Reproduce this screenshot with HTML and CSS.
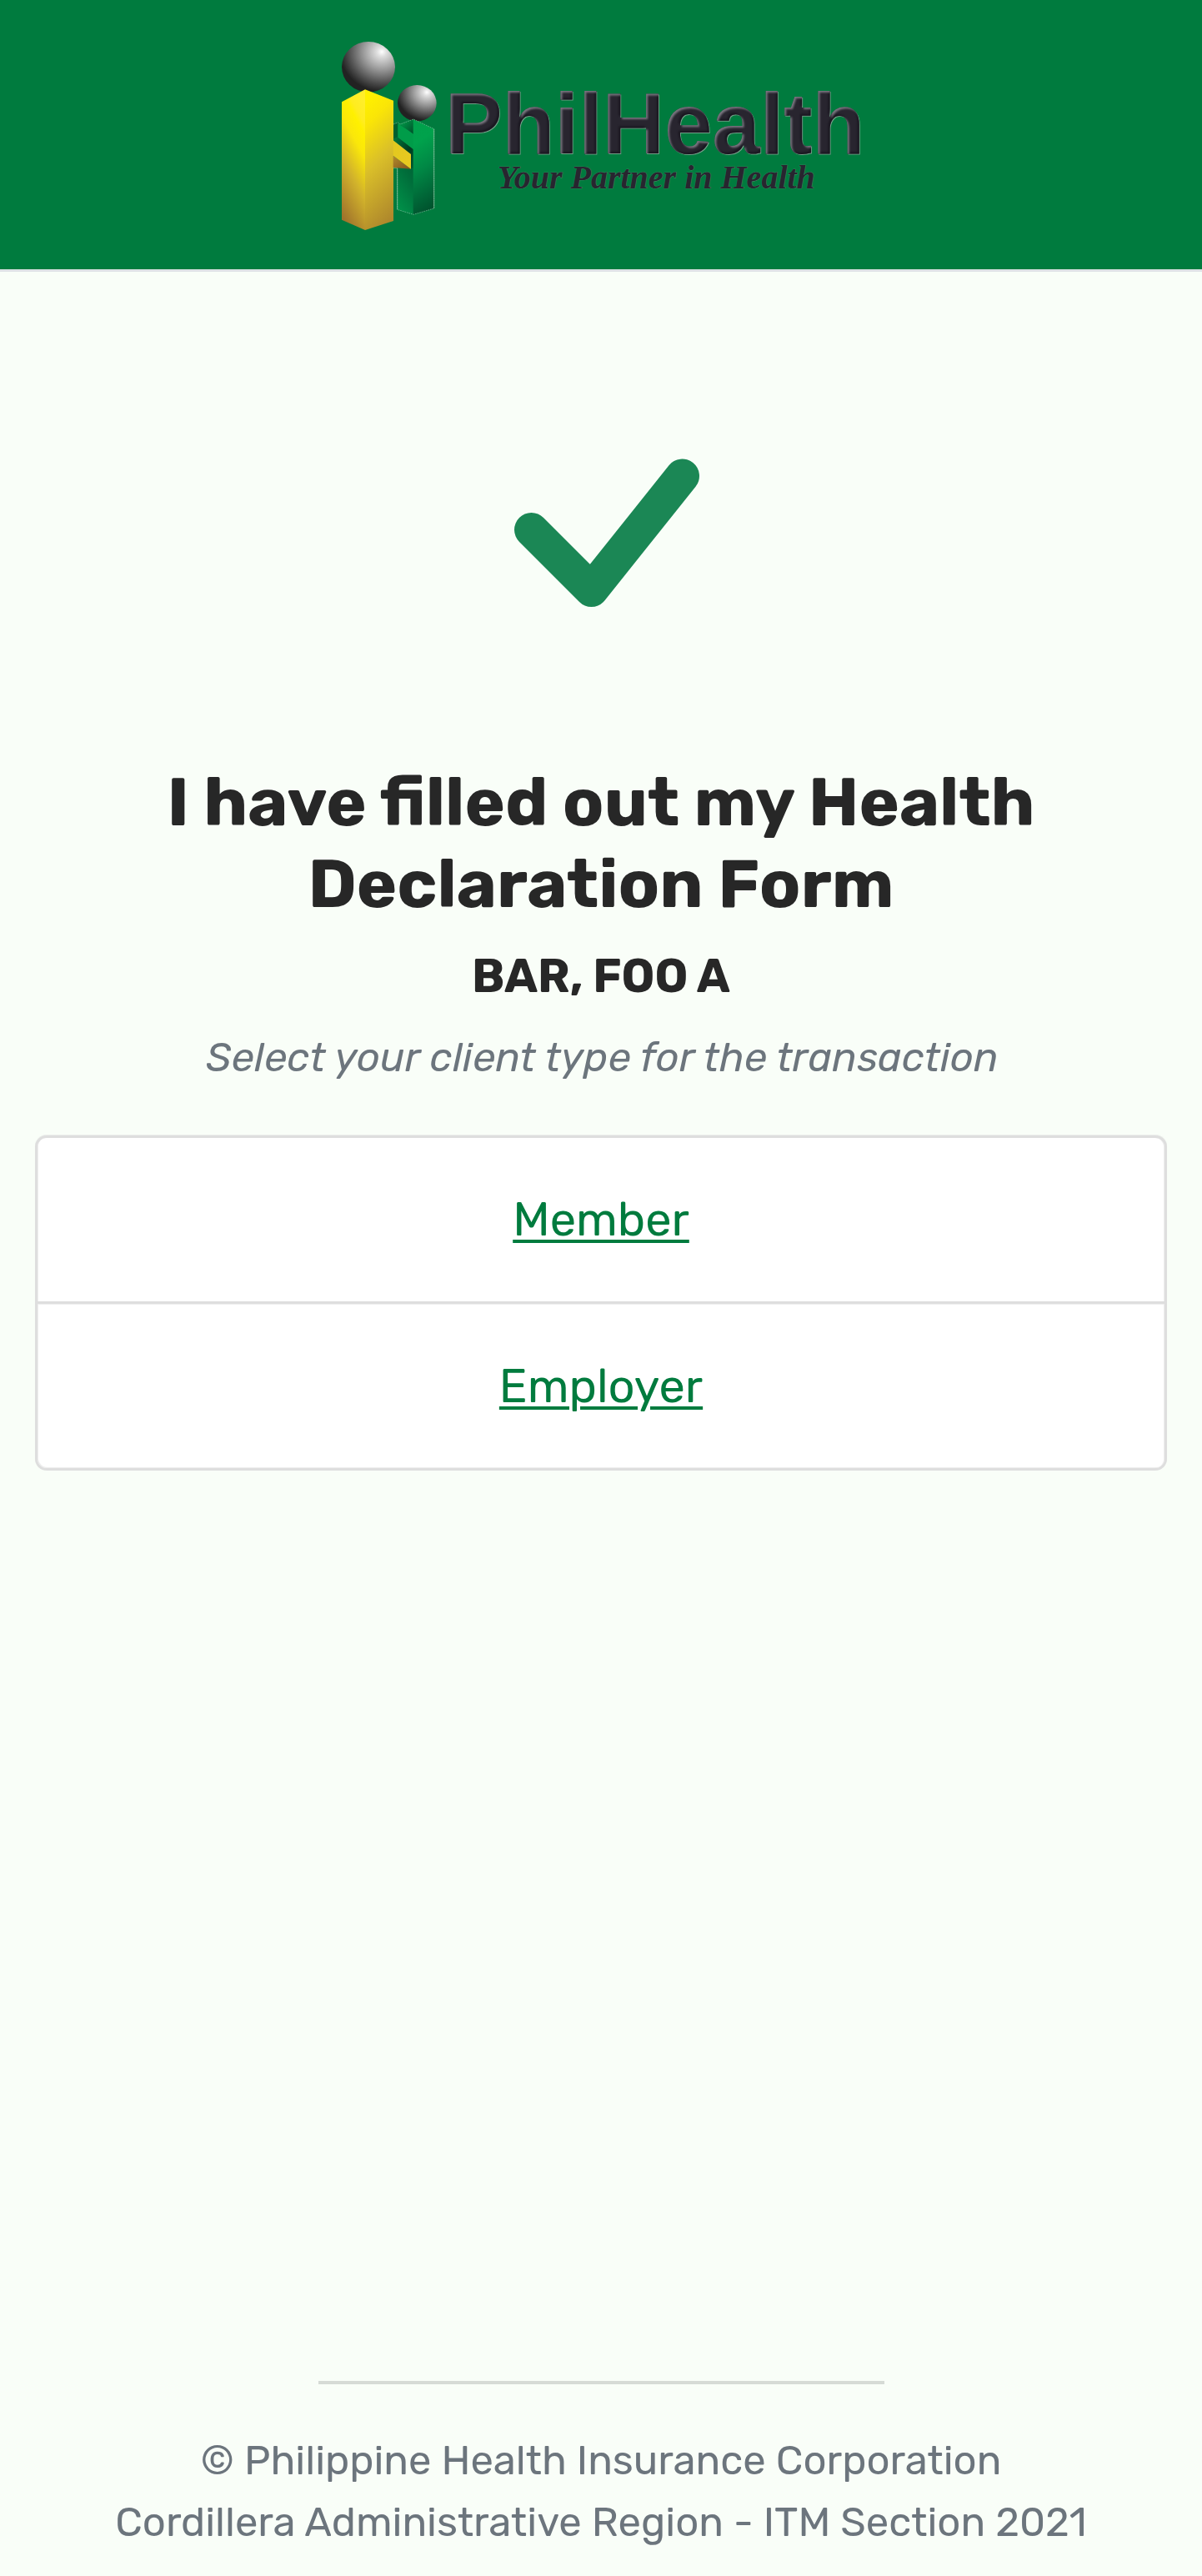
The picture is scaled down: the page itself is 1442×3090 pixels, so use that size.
FILE: index.html
```html
<!DOCTYPE html>
<html lang="en">
<head>
<meta charset="utf-8">
<title>PhilHealth Health Declaration</title>
<link rel="stylesheet" href="styles.css">
</head>
<body>
<header class="site-header">
  <svg class="logo" viewBox="27 45 1932 708" role="img" aria-label="PhilHealth">
    <defs>
      <radialGradient id="ball" cx="0.75" cy="0.2" r="0.78">
        <stop offset="0" stop-color="#fff"/>
        <stop offset="0.12" stop-color="#dedede"/>
        <stop offset="0.45" stop-color="#999"/>
        <stop offset="0.78" stop-color="#505050"/>
        <stop offset="1" stop-color="#222"/>
      </radialGradient>
      <linearGradient id="goldLeft" x1="0.65" y1="0" x2="0.35" y2="1">
        <stop offset="0" stop-color="#ffee2a"/>
        <stop offset="0.13" stop-color="#ffec20"/>
        <stop offset="0.2" stop-color="#fff000"/>
        <stop offset="0.35" stop-color="#fae70a"/>
        <stop offset="0.62" stop-color="#d2b32b"/>
        <stop offset="1" stop-color="#a0732c"/>
      </linearGradient>
      <linearGradient id="goldRight" x1="0.4" y1="0" x2="0.6" y2="1">
        <stop offset="0" stop-color="#fff000"/>
        <stop offset="0.18" stop-color="#fae507"/>
        <stop offset="0.5" stop-color="#dabf29"/>
        <stop offset="1" stop-color="#ad862c"/>
      </linearGradient>
      <linearGradient id="goldArm" x1="0" y1="0" x2="1" y2="1">
        <stop offset="0" stop-color="#e2c820"/>
        <stop offset="1" stop-color="#e9c91f"/>
      </linearGradient>
      <linearGradient id="brown" x1="0" y1="0" x2="1" y2="1">
        <stop offset="0" stop-color="#b28b2c"/>
        <stop offset="1" stop-color="#82521d"/>
      </linearGradient>
      <linearGradient id="greenRight" x1="0.45" y1="0" x2="0.6" y2="1">
        <stop offset="0" stop-color="#00a14b"/>
        <stop offset="0.2" stop-color="#00a24c"/>
        <stop offset="0.5" stop-color="#008845"/>
        <stop offset="0.8" stop-color="#006637"/>
        <stop offset="1" stop-color="#00502c"/>
      </linearGradient>
      <linearGradient id="greenLeft" x1="0.7" y1="0" x2="0.4" y2="1">
        <stop offset="0" stop-color="#005b32"/>
        <stop offset="0.45" stop-color="#006c3a"/>
        <stop offset="1" stop-color="#008e48"/>
      </linearGradient>
      <linearGradient id="greenTop" x1="0" y1="0" x2="1" y2="1">
        <stop offset="0.1" stop-color="#009b49"/>
        <stop offset="1" stop-color="#004d29"/>
      </linearGradient>
      <linearGradient id="shade" x1="0" y1="0" x2="1" y2="1">
        <stop offset="0" stop-color="#007a3e"/>
        <stop offset="0.6" stop-color="#003c20"/>
        <stop offset="1" stop-color="#005a30"/>
      </linearGradient>
      <filter id="bevel" x="-2%" y="-10%" width="104%" height="120%" color-interpolation-filters="sRGB">
        <feOffset in="SourceAlpha" dx="5" dy="7" result="moved"/>
        <feGaussianBlur in="moved" stdDeviation="3" result="soft"/>
        <feComposite in="SourceAlpha" in2="soft" operator="out" result="edge"/>
        <feFlood flood-color="#8d8a94" flood-opacity="0.8"/>
        <feComposite in2="edge" operator="in" result="light"/>
        <feOffset in="SourceAlpha" dx="-5" dy="-7"/>
        <feGaussianBlur stdDeviation="3" result="soft2"/>
        <feComposite in="SourceAlpha" in2="soft2" operator="out" result="edge2"/>
        <feFlood flood-color="#15131c" flood-opacity="0.8"/>
        <feComposite in2="edge2" operator="in" result="dark"/>
        <feOffset in="SourceAlpha" dx="1.5" dy="2.5" result="rimShape"/>
        <feFlood flood-color="#8fa89a" flood-opacity="0.8"/>
        <feComposite in2="rimShape" operator="in" result="rim"/>
        <feMerge>
          <feMergeNode in="rim"/>
          <feMergeNode in="SourceGraphic"/>
          <feMergeNode in="dark"/>
          <feMergeNode in="light"/>
        </feMerge>
      </filter>
    </defs>
    <ellipse cx="156" cy="151" rx="96" ry="91" fill="url(#ball)"/>
    <ellipse cx="331" cy="281" rx="70" ry="65" fill="url(#ball)"/>
    <path d="M260 400L318 440V682L260 664Z" fill="url(#greenLeft)"/>
    <path d="M246 357L262 351V404L246 410Z" fill="#00602f"/>
    <path d="M246 410L262 402L318 446V515H306V463L246 416Z" fill="url(#shade)"/>
    <path d="M262 354L318 392V448L262 404Z" fill="#009c49"/>
    <path d="M270 357L318 339V392Z" fill="url(#greenTop)"/>
    <path d="M317 339L392 374V660L317 682Z" fill="url(#greenRight)"/>
    <path d="M246 357L262 351L270 357L318 339L392 374V660L318 682L260 664V515" fill="none" stroke="#b9dcc6" stroke-width="2" stroke-dasharray="5 3" opacity="0.75"/>
    <path d="M392 374V660M260 664V515H246" fill="none" stroke="#8fc5a5" stroke-width="2"/>
    <path d="M60 277L144 232V738L60 701Z" fill="url(#goldLeft)"/>
    <path d="M144 232L246 272V705L144 738Z" fill="url(#goldRight)"/>
    <path d="M245 470L309 518L245 513Z" fill="url(#brown)"/>
    <path d="M245 415L309 465V518L245 470Z" fill="url(#goldArm)"/>
    <text class="logo-name" x="431" y="463" filter="url(#bevel)">PhilHealth</text>
    <text class="logo-tagline" x="620" y="587">Your Partner in Health</text>
  </svg>
</header>

<main class="content">
  <svg class="check" viewBox="0 0 224 180" aria-hidden="true">
    <path d="M20.5 85.5L92.5 157.5L201.5 21"/>
  </svg>
  <h1 class="title">I have filled out my Health<br>Declaration Form</h1>
  <p class="name">BAR, FOO A</p>
  <p class="hint">Select your client type for the transaction</p>
  <ul class="choices">
    <li class="choice"><a class="link" href="#">Member</a></li>
    <li class="choice"><a class="link" href="#">Employer</a></li>
  </ul>
</main>

<footer class="footer">
  <hr class="rule">
  <p>© Philippine Health Insurance Corporation</p>
  <p>Cordillera Administrative Region - ITM Section 2021</p>
</footer>
</body>
</html>
```

FILE: styles.css
```css
* {
  box-sizing: border-box;
}

body {
  margin: 0;
  min-height: 3090px;
  display: flex;
  flex-direction: column;
  background: #f9fef8;
  color: #272727;
  font-family: Rubik, Inter, "Liberation Sans", sans-serif;
  text-align: center;
}

h1,
p,
ul {
  margin: 0;
  padding: 0;
}

.site-header {
  height: 326px;
  padding-top: 45px;
  background: #007b3e;
  border-bottom: 3px solid #dee2e6;
}

.logo {
  display: block;
  width: 644px;
  height: 236px;
  margin: 0 auto;
}

.logo-name {
  font: bold 309px "Liberation Sans", Arial, sans-serif;
  fill: #28252f;
}

.logo-tagline {
  font: italic bold 120px "Liberation Serif", "Times New Roman", serif;
  fill: #28252f;
  stroke: #8a9a94;
  stroke-width: 2px;
  stroke-opacity: 0.6;
  paint-order: stroke;
}

.content {
  display: flex;
  flex-direction: column;
  align-items: center;
  flex: 1;
  padding-top: 224px;
}

.check {
  width: 224px;
  height: 180px;
  margin-left: 16px;
  fill: none;
  stroke: #1b8755;
  stroke-width: 41px;
  stroke-linecap: round;
  stroke-linejoin: round;
}

.title {
  margin-top: 183px;
  font-size: 81.6px;
  font-weight: 700;
  line-height: 98px;
}

.name {
  margin-top: 29px;
  font-size: 56px;
  font-weight: 700;
  line-height: 67px;
}

.hint {
  margin-top: 27px;
  padding-left: 3px;
  color: #6c757d;
  font-size: 49px;
  font-style: italic;
  line-height: 73px;
  letter-spacing: 0.1px;
}

.choices {
  width: 1358px;
  margin-top: 57px;
  background: #fff;
  border: 3px solid #dedede;
  border-radius: 14px;
  box-shadow: 0 -1px 0 rgba(222, 222, 222, 0.5), inset 1px -1px 0 #eee, inset -1px 0 0 #eee;
  list-style: none;
}

.choice {
  display: flex;
  align-items: center;
  justify-content: center;
  height: 197px;
}

.choice:first-child {
  height: 199px;
  border-bottom: 3px solid #dedede;
}

.choice + .choice {
  box-shadow: inset 0 1px 0 #eee;
}

.link {
  color: #007b3e;
  font-size: 56px;
  line-height: 84px;
  text-decoration-thickness: 4px;
  text-underline-offset: 5px;
}

.footer {
  padding-bottom: 28px;
  color: #6c757d;
  font-size: 49px;
  line-height: 74px;
}

.rule {
  width: 679px;
  height: 4px;
  margin: 0 auto 54px;
  border: 0;
  background: #d6dbd6;
}
```
